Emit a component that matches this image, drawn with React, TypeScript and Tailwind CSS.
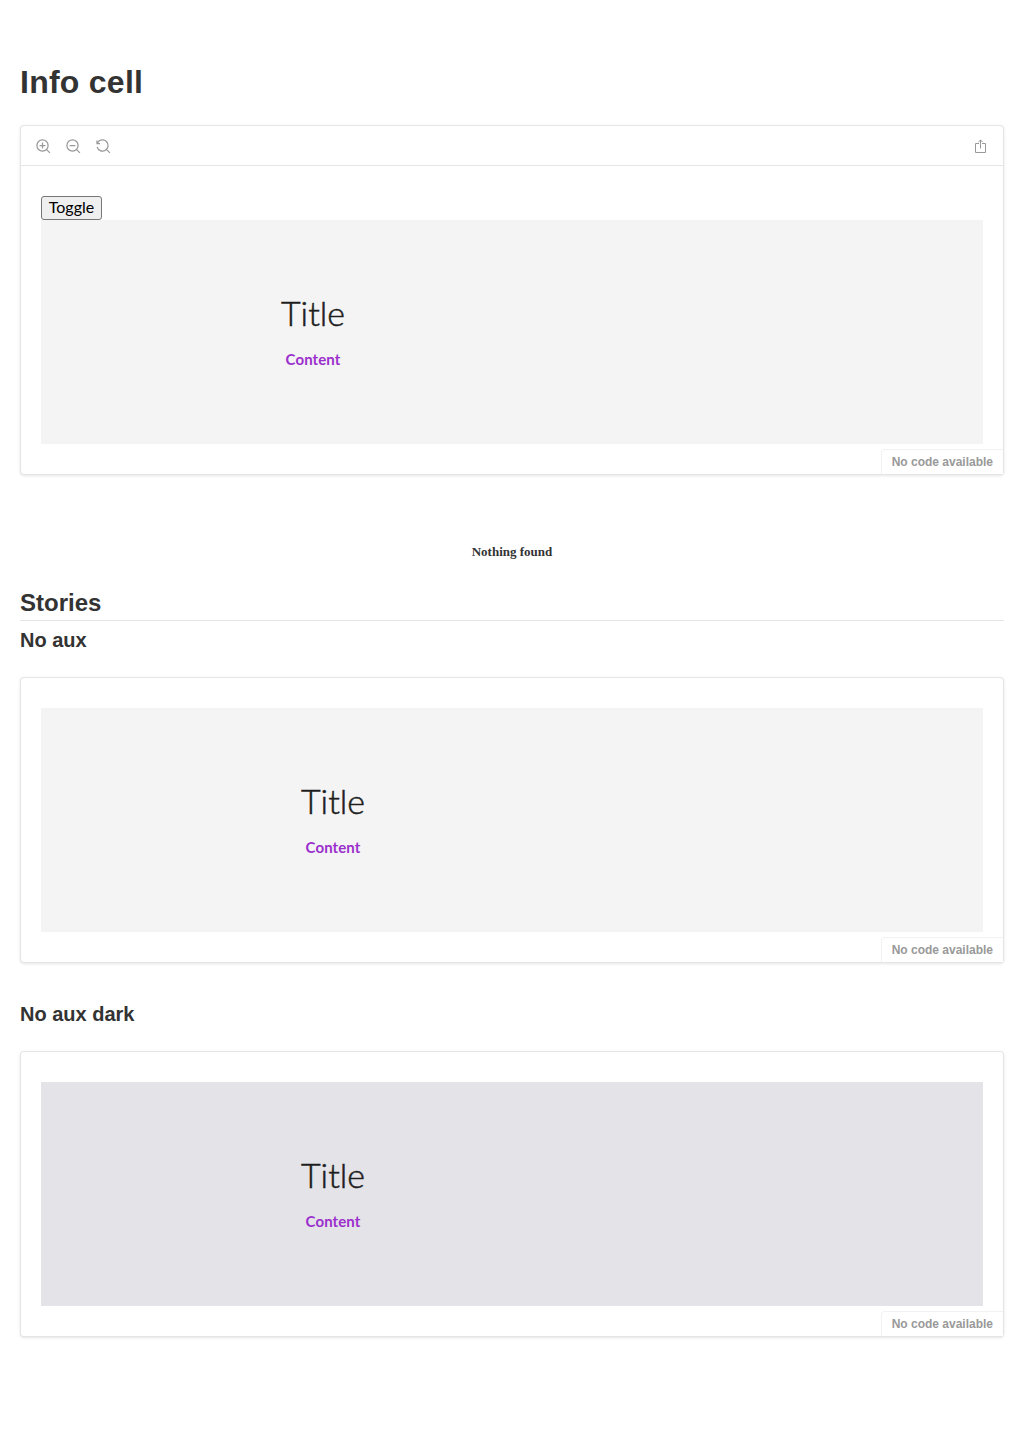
import type { ReactNode } from "react";

const sans = "font-['Liberation_Sans',Arial,sans-serif]";

function Glyph({ children }: { children: ReactNode }) {
  return (
    <svg className="block h-3.5 w-3.5 overflow-visible" viewBox="0 0 14 14" fill="none" stroke="currentColor" strokeWidth="1.25">
      {children}
    </svg>
  );
}

function Info({ dark, inset }: { dark?: boolean; inset: "near" | "far" }) {
  return (
    <div
      className={`flex h-56 flex-col items-start pt-[69px] ${dark ? "bg-[#e4e3e8]" : "bg-[#f4f4f4]"} ${
        inset === "near" ? "pl-[240px]" : "pl-[260px]"
      } font-[Lato,sans-serif]`}
    >
      <div className="flex w-16 flex-col items-center whitespace-nowrap">
        <div className="text-[34px] leading-[48px] font-light text-[#1d1d1d] [-webkit-text-stroke:0.5px_#1d1d1d]">Title</div>
        <div className="mt-[11px] text-[15px] leading-[22px] font-bold tracking-[0.1px] text-[#9b30cd]">Content</div>
      </div>
    </div>
  );
}

function Preview({ children, toolbar }: { children: ReactNode; toolbar?: ReactNode }) {
  return (
    <div className="relative rounded-[4px] border border-black/10 bg-white shadow-[0_1px_3px_0_rgba(0,0,0,0.1)]">
      {toolbar}
      <div className="px-5 py-[30px]">{children}</div>
      <div
        className={`absolute right-0 bottom-0 rounded-tl-[4px] border-t border-l border-black/5 bg-white px-2.5 py-1 text-[12px] leading-4 font-bold text-[#999999] ${sans}`}
      >
        No code available
      </div>
    </div>
  );
}

function Toolbar() {
  return (
    <div className="flex h-10 items-center justify-between border-b border-black/10 px-[15px] pt-px text-[#999999]">
      <div className="flex gap-4">
        <Glyph>
          <circle cx="6.5" cy="6.5" r="5.6" />
          <path d="M10.4 10.4l3.5 3.5M3.6 6.5h5.8M6.5 3.6v5.8" />
        </Glyph>
        <Glyph>
          <circle cx="6.5" cy="6.5" r="5.6" />
          <path d="M10.4 10.4l3.5 3.5M3.6 6.5h5.8" />
        </Glyph>
        <Glyph>
          <path d="M1.6 3.8A5.6 5.6 0 1 1 1.1 7.8M10.4 10.4l3.5 3.5M1 1.6v2.9h3" />
        </Glyph>
      </div>
      <Glyph>
        <path d="M5 4.5H1.5v9h10v-9H8M6.5 9.5V1M4.3 3.2l2.2-2.2 2.2 2.2" strokeWidth="1" />
      </Glyph>
    </div>
  );
}

export default function App() {
  return (
    <main className={`min-h-[1441px] bg-white px-5 pt-16 text-[#333333] ${sans}`}>
      <h1 className="h-[61px] text-[32px] leading-9 font-bold tracking-[0.25px]">Info cell</h1>
      <Preview toolbar={<Toolbar />}>
        <button className="block h-6 w-[61px] rounded-[3px] border border-[#767676] bg-[#efefef] pb-0.5 font-[Lato,sans-serif] text-[16px] leading-5 text-black">
          Toggle
        </button>
        <Info inset="near" />
      </Preview>
      <div className="mt-[67px] text-center font-['Liberation_Serif',serif] text-[13px] leading-5 font-bold">
        Nothing found
      </div>
      <h2 className="mt-6 h-[35px] border-b border-black/10 text-[24px] leading-[34px] font-bold">Stories</h2>
      <h3 className="mt-[7px] mb-[25px] text-[20px] leading-6 font-bold">No aux</h3>
      <Preview>
        <Info inset="far" />
      </Preview>
      <h3 className="mt-[39px] mb-[25px] text-[20px] leading-6 font-bold">No aux dark</h3>
      <Preview>
        <Info inset="far" dark />
      </Preview>
    </main>
  );
}
